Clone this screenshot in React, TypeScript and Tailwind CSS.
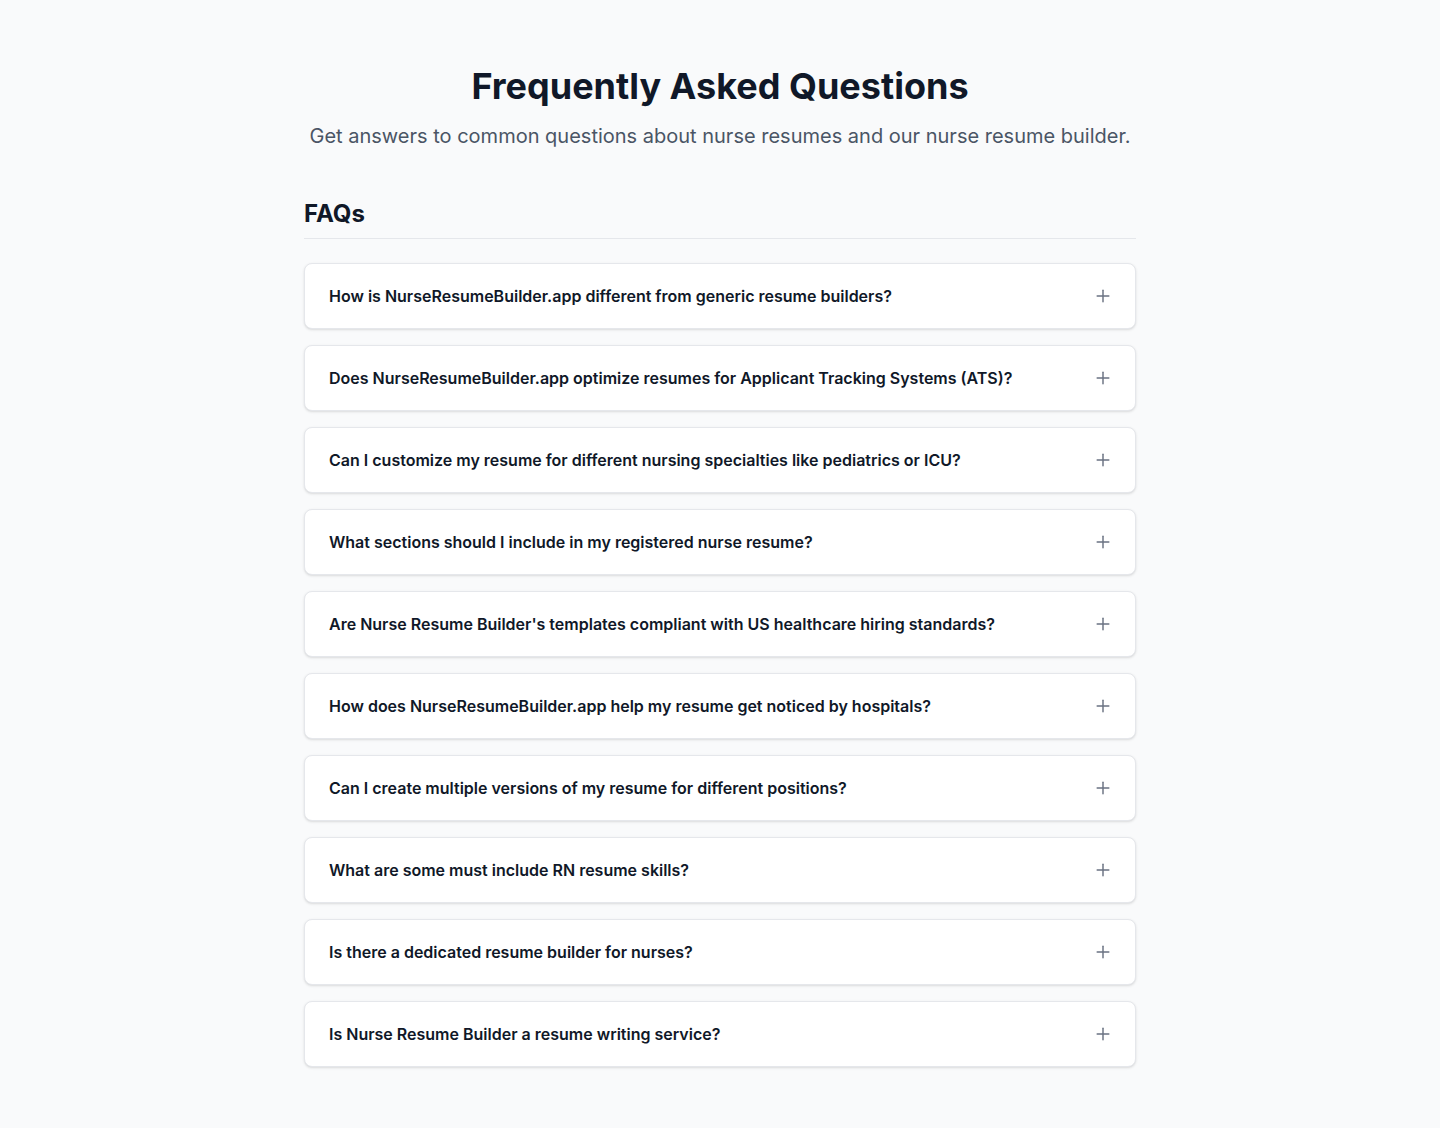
import React, { useState } from "react";
import { Plus, Minus } from "lucide-react";

const faqs = [
  "How is NurseResumeBuilder.app different from generic resume builders?",
  "Does NurseResumeBuilder.app optimize resumes for Applicant Tracking Systems (ATS)?",
  "Can I customize my resume for different nursing specialties like pediatrics or ICU?",
  "What sections should I include in my registered nurse resume?",
  "Are Nurse Resume Builder's templates compliant with US healthcare hiring standards?",
  "How does NurseResumeBuilder.app help my resume get noticed by hospitals?",
  "Can I create multiple versions of my resume for different positions?",
  "What are some must include RN resume skills?",
  "Is there a dedicated resume builder for nurses?",
  "Is Nurse Resume Builder a resume writing service?",
];

const FaqItem = ({ question }: { question: string }) => {
  const [open, setOpen] = useState(false);

  return (
    <div className="bg-white border border-gray-200 rounded-lg shadow-sm">
      <button
        onClick={() => setOpen(!open)}
        className="w-full flex items-center justify-between px-6 py-5 text-left"
      >
        <span className="text-base leading-6 font-semibold text-gray-900">
          {question}
        </span>
        {open ? (
          <Minus className="w-5 h-5 -mr-0.5 text-gray-500 shrink-0" strokeWidth={1.75} />
        ) : (
          <Plus className="w-5 h-5 -mr-0.5 text-gray-500 shrink-0" strokeWidth={1.75} />
        )}
      </button>
      {open && (
        <div className="px-6 pb-5 text-gray-600">
          Answer coming soon.
        </div>
      )}
    </div>
  );
};

export default function App() {
  return (
    <div
      className="min-h-screen bg-gray-50 pt-[66px] pb-16"
      style={{ fontFamily: "Inter, 'Noto Sans', sans-serif" }}
    >
      <div className="max-w-4xl mx-auto px-8">
        <h1 className="text-4xl font-bold text-gray-900 text-center mb-4">
          Frequently Asked Questions
        </h1>
        <p className="text-xl text-gray-600 text-center mb-12">
          Get answers to common questions about nurse resumes and our nurse
          resume builder.
        </p>

        <h2 className="text-2xl font-bold text-gray-900 pb-2 border-b border-gray-200 mb-6">
          FAQs
        </h2>

        <div className="space-y-4">
          {faqs.map((q) => (
            <FaqItem key={q} question={q} />
          ))}
        </div>
      </div>
    </div>
  );
}
